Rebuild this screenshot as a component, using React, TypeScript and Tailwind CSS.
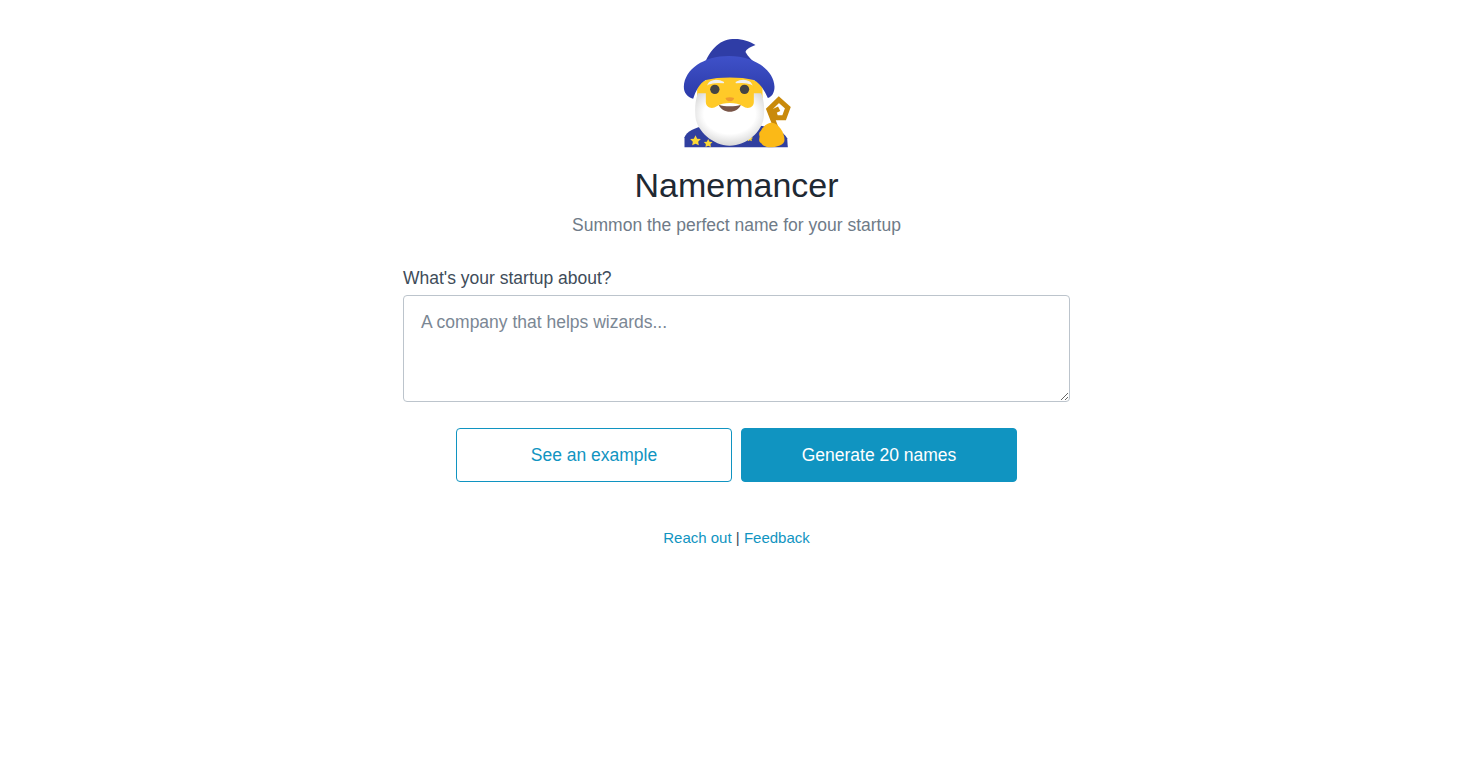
function WizardEmoji() {
  return (
    <svg viewBox="61.5 24 336 336" className="h-[112px] w-[112px]" aria-hidden="true">
      <defs>
        <linearGradient id="hat" x1="0" y1="0" x2="0" y2="1">
          <stop offset="0" stopColor="#3f51c9" />
          <stop offset="1" stopColor="#2b3aa8" />
        </linearGradient>
        <radialGradient id="beard" cx="0.5" cy="0.4" r="0.62">
          <stop offset="0.6" stopColor="#ffffff" />
          <stop offset="1" stopColor="#d4d4d4" />
        </radialGradient>
      </defs>
      {/* robe */}
      <path d="M72 352 L72 322 C78 303 104 293 132 287 L300 287 C335 293 368 300 380 325 L382 352 Z" fill="#303f9f" />
      <path d="M105 316 l5 10 11 1 -8 8 2 11 -10 -5 -10 5 2 -11 -8 -8 11 -1 Z" fill="#fdd835" />
      <path d="M143 327 l4 8 9 1 -6 6 1 9 -8 -4 -8 4 1 -9 -6 -6 9 -1 Z" fill="#fdd835" />
      <path d="M268 316 l3 6 7 1 -5 4 1 7 -6 -3 -6 3 1 -7 -5 -4 7 -1 Z" fill="#fdd835" />
      {/* side hair */}
      <path d="M110 160 L140 150 L140 205 L110 205 Z" fill="#ffca28" />
      <path d="M276 150 L306 160 L306 205 L276 205 Z" fill="#ffca28" />
      {/* beard */}
      <path d="M112 190 C103 215 103 240 105 262 C110 305 160 348 208 347 C258 346 306 305 310 260 C312 240 312 215 302 190 Z" fill="url(#beard)" />
      {/* face */}
      <path d="M136 140 L280 140 L280 216 C280 232 262 240 246 228 C230 216 186 216 170 228 C154 240 136 232 136 216 Z" fill="#ffca28" />
      <path d="M144 162 C150 150 172 148 190 158 C172 156 156 156 144 162 Z" fill="#f0f0f0" stroke="#f0f0f0" strokeWidth="4" />
      <path d="M226 158 C244 148 266 150 272 162 C260 156 244 156 226 158 Z" fill="#f0f0f0" stroke="#f0f0f0" strokeWidth="4" />
      <circle cx="163" cy="178" r="14" fill="#444444" />
      <circle cx="252" cy="178" r="14" fill="#444444" />
      <path d="M195 204 C202 201 214 201 221 204 C220 211 213 214 208 214 C203 214 196 211 195 204 Z" fill="#f09a2e" />
      <path d="M175 224 C192 230 224 230 241 224 C236 238 222 245 208 245 C194 245 180 238 175 224 Z" fill="#795548" />
      {/* hat */}
      <path d="M128 112 C142 72 168 34 208 28 C238 24 264 32 285 45 C270 52 258 56 255 66 C262 80 274 90 288 104 Z" fill="#2f3da6" />
      <path d="M70 170 C72 118 130 78 205 78 C282 78 340 120 342 170 C342 188 334 200 322 204 C312 182 300 160 280 150 C240 140 176 140 136 150 C116 160 106 184 98 206 C80 200 70 188 70 170 Z" fill="url(#hat)" />
      {/* staff */}
      <path d="M346 292 L325 238 L355 209 L382 233 L371 263 L346 263 L340 244 L356 236" fill="none" stroke="#c98a0b" strokeWidth="15" strokeLinejoin="miter" />
      {/* hand */}
      <path d="M297 322 C297 298 316 278 334 278 C354 280 372 306 372 330 C372 345 350 352 325 352 C308 350 297 340 297 322 Z" fill="#fbb917" />
      <circle cx="305" cy="312" r="9" fill="#fbb917" />
      <circle cx="305" cy="330" r="9" fill="#fbb917" />
    </svg>
  );
}

export default function App() {
  return (
    <div className="min-h-screen bg-white font-['Liberation_Sans',sans-serif]">
      <div className="mx-auto flex w-[667px] flex-col items-center pt-[38px]">
        <WizardEmoji />
        <h1 className="mt-[13px] text-[34px] leading-[45px] font-normal text-[#1f2933]">Namemancer</h1>
        <p className="mt-[4px] text-[17.5px] leading-[27px] text-[#6f7b88]">Summon the perfect name for your startup</p>
        <label className="mt-[26px] w-full text-[17.5px] leading-[27px] text-[#3e4c59]">What's your startup about?</label>
        <textarea
          className="mt-[3px] h-[107px] w-full rounded border border-[#bcc4cc] px-[17px] py-[13px] text-[17.5px] leading-[27px] text-[#3e4c59] outline-none placeholder:text-[#7b8794]"
          placeholder="A company that helps wizards..."
        />
        <div className="mt-[26px] flex gap-[9px]">
          <button className="h-[54px] w-[276px] rounded border border-[#1094c1] bg-white text-[17.5px] text-[#1094c1]">See an example</button>
          <button className="h-[54px] w-[276px] rounded border border-[#1094c1] bg-[#1094c1] text-[17.5px] text-white">Generate 20 names</button>
        </div>
        <p className="mt-[44px] text-[15px] leading-[24px] text-[#3e4c59]">
          <a className="text-[#1094c1]" href="#reach-out">Reach out</a> | <a className="text-[#1094c1]" href="#feedback">Feedback</a>
        </p>
      </div>
    </div>
  );
}
